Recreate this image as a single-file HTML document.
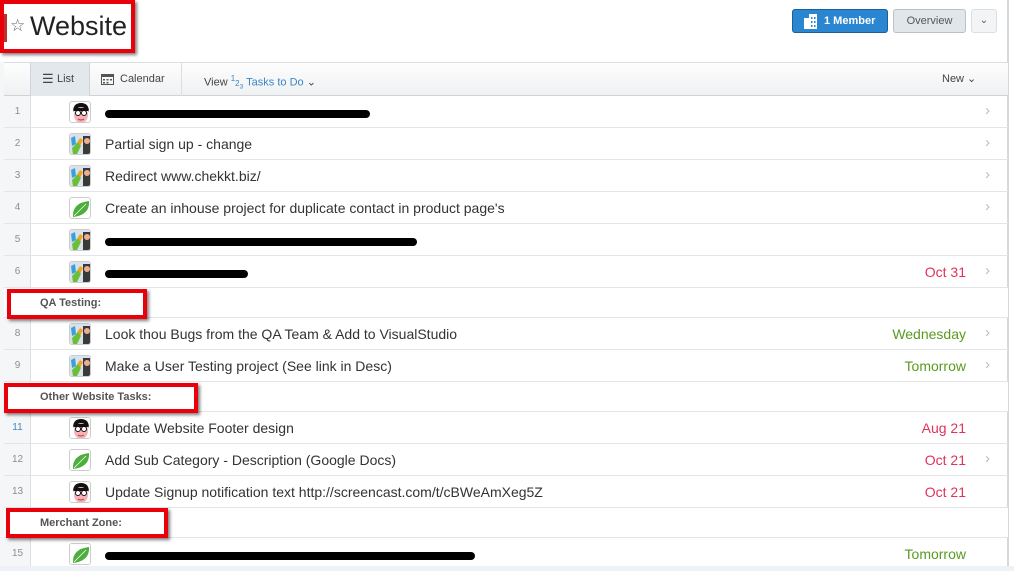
<!DOCTYPE html>
<html><head><meta charset="utf-8"><style>
*{box-sizing:border-box;margin:0;padding:0}
body{width:1014px;height:571px;overflow:hidden;background:#fff;font-family:"Liberation Sans",Arial,sans-serif;position:relative;color:#333}
.gut{position:absolute;left:0;top:62px;width:31px;height:509px;background:#f5f6f7;border-right:1px solid #dde0e3}
.rf{position:absolute;border:4px solid #e8000a;box-shadow:2px 2px 3px rgba(0,0,0,.5)}
.tb{position:absolute;left:4px;top:62px;width:1004px;height:34px;background:linear-gradient(#fdfdfd,#f0f1f2);border-top:1px solid #dcdfe2;border-bottom:1px solid #cfd3d7}
.row{position:absolute;left:4px;width:1004px;height:32px;border-bottom:1px solid #e3e5e8;font-size:14px}
.row .n{position:absolute;left:0;width:27px;text-align:center;top:10px;font-size:10px;color:#8a8f95}
.row .t{position:absolute;left:101px;top:8px;color:#333}
.row .d{position:absolute;right:42px;top:8px}
.row .c{position:absolute;right:18px;top:6px;color:#b8bcc0;font-size:15px}
.av{position:absolute;left:65px;top:5px;width:22px;height:22px;border:1px solid #ccc;border-radius:3px;overflow:hidden;background:#fff}
.bar{position:absolute;left:101px;top:14px;height:8px;background:#000;border-radius:4px}
.sec{position:absolute;left:4px;width:1004px;height:30px;border-bottom:1px solid #e3e5e8;background:#fff}
.sec span{position:absolute;left:36px;top:9px;font-size:11px;color:#555;font-weight:bold}
.red{color:#e0335a}.grn{color:#5a9a1f}
</style></head><body>
<div class="gut"></div>
<div style="position:absolute;left:1007px;top:0;width:2px;height:571px;background:#d6d9dc"></div>
<div class="rf" style="left:0;top:0;width:135px;height:53px"></div>
<div style="position:absolute;left:4px;top:14px;width:3px;height:28px;background:#b33"></div>
<div style="position:absolute;left:10px;top:16px;font-size:17px;color:#666">☆</div>
<div style="position:absolute;left:30px;top:11px;font-size:27px;color:#222">Website</div>
<div style="position:absolute;left:792px;top:9px;width:96px;height:24px;background:#2a86d0;border:1px solid #1a5f9c;border-radius:3px;color:#fff;font-size:11px;font-weight:bold;line-height:22px;padding-left:31px">1 Member
<svg style="position:absolute;left:10px;top:4px" width="16" height="15"><rect x="1" y="4" width="5" height="11" fill="#fff"/><rect x="6" y="0" width="8" height="15" fill="#fff"/><g fill="#2a86d0"><rect x="8" y="3" width="1.5" height="2"/><rect x="11" y="3" width="1.5" height="2"/><rect x="8" y="7" width="1.5" height="2"/><rect x="11" y="7" width="1.5" height="2"/><rect x="8" y="11" width="1.5" height="2"/><rect x="11" y="11" width="1.5" height="2"/></g></svg></div>
<div style="position:absolute;left:893px;top:9px;width:73px;height:24px;background:#e1e6eb;border:1px solid #b9c1c9;border-radius:3px;color:#555;font-size:11px;line-height:22px;text-align:center">Overview</div>
<div style="position:absolute;left:971px;top:9px;width:26px;height:24px;background:#f3f4f5;border:1px solid #dcdfe2;border-radius:3px;color:#555;font-size:10px;line-height:22px;text-align:center">⌄</div>
<div class="tb">
<div style="position:absolute;left:26px;top:0;width:60px;height:33px;background:#e3e8ed;border-left:1px solid #cfd4da;border-right:1px solid #cfd4da;font-size:11px;color:#444;line-height:32px;padding-left:26px">List<span style="position:absolute;left:11px;top:0;font-size:13px">☰</span></div>
<div style="position:absolute;left:86px;top:0;width:92px;height:33px;border-right:1px solid #dcdfe2;font-size:11px;color:#444;line-height:32px;padding-left:30px">Calendar
<svg style="position:absolute;left:11px;top:10px" width="13" height="12"><rect x="0.5" y="1.5" width="12" height="10" fill="none" stroke="#555"/><rect x="0" y="1" width="13" height="3" fill="#555"/><g fill="#555"><rect x="2" y="6" width="2" height="1.5"/><rect x="5.5" y="6" width="2" height="1.5"/><rect x="9" y="6" width="2" height="1.5"/><rect x="2" y="9" width="2" height="1.5"/><rect x="5.5" y="9" width="2" height="1.5"/></g></svg></div>
<div style="position:absolute;left:200px;top:0;font-size:11px;color:#444;line-height:32px">View <sup style="color:#3b87c6;font-size:8px">1</sup><span style="color:#3b87c6;font-size:8px">2<sub>3</sub></span> <span style="color:#3b87c6">Tasks to Do</span> <span style="color:#444">⌄</span></div>
<div style="position:absolute;left:938px;top:0;font-size:11px;color:#444;line-height:32px">New ⌄</div>
</div>
<div style="position:absolute;left:0;top:566px;width:1014px;height:5px;background:#eef2f6"></div>
<svg width="0" height="0" style="position:absolute"><defs>
<symbol id="face" viewBox="0 0 22 22"><rect width="22" height="22" fill="#fff"/><path d="M3 10 Q3 1 11 1 Q19 1 19 10 L17 6 L5 6Z" fill="#111"/><ellipse cx="11" cy="13" rx="7" ry="8" fill="#f3b3b9"/><path d="M4 6 L18 6 L18 9 L4 9Z" fill="#111"/><circle cx="8" cy="11" r="2.5" fill="#fff" stroke="#111"/><circle cx="14" cy="11" r="2.5" fill="#fff" stroke="#111"/><path d="M8 17 Q11 19 14 17" stroke="#c33" fill="none"/></symbol>
<symbol id="logo" viewBox="0 0 22 22"><rect width="22" height="22" fill="#d9e2ea"/><path d="M1 4 L5 2 L6 10 L2 12Z" fill="#3aa0d8"/><path d="M5 12 L10 4 L13 6 L9 14Z" fill="#f4a020"/><path d="M2 14 L8 8 L11 12 L7 20 L3 20Z" fill="#6abf3a"/><rect x="13" y="2" width="9" height="20" fill="#3a3a3a"/><circle cx="17" cy="7" r="3" fill="#e8b090"/></symbol>
<symbol id="leaf" viewBox="0 0 22 22"><rect width="22" height="22" fill="#fff"/><path d="M3 19 Q2 5 19 3 Q20 17 3 19Z" fill="#4caf3c"/><path d="M4 18 L16 6" stroke="#fff" stroke-width="0.8"/></symbol>
</defs></svg>

<div class="row" style="top:96px"><span class="n">1</span><div class="av"><svg width="22" height="22"><use href="#face"/></svg></div><div class="bar" style="width:265px"></div><span class="c">›</span></div>
<div class="row" style="top:128px"><span class="n">2</span><div class="av"><svg width="22" height="22"><use href="#logo"/></svg></div><span class="t">Partial sign up - change</span><span class="c">›</span></div>
<div class="row" style="top:160px"><span class="n">3</span><div class="av"><svg width="22" height="22"><use href="#logo"/></svg></div><span class="t">Redirect www.chekkt.biz/</span><span class="c">›</span></div>
<div class="row" style="top:192px"><span class="n">4</span><div class="av"><svg width="22" height="22"><use href="#leaf"/></svg></div><span class="t">Create an inhouse project for duplicate contact in product page's</span><span class="c">›</span></div>
<div class="row" style="top:224px"><span class="n">5</span><div class="av"><svg width="22" height="22"><use href="#logo"/></svg></div><div class="bar" style="width:312px"></div></div>
<div class="row" style="top:256px"><span class="n">6</span><div class="av"><svg width="22" height="22"><use href="#logo"/></svg></div><div class="bar" style="width:143px"></div><span class="d red">Oct 31</span><span class="c">›</span></div>
<div class="sec" style="top:288px"><span>QA Testing:</span></div>
<div class="row" style="top:318px"><span class="n">8</span><div class="av"><svg width="22" height="22"><use href="#logo"/></svg></div><span class="t">Look thou Bugs from the QA Team &amp; Add to VisualStudio</span><span class="d grn">Wednesday</span><span class="c">›</span></div>
<div class="row" style="top:350px"><span class="n">9</span><div class="av"><svg width="22" height="22"><use href="#logo"/></svg></div><span class="t">Make a User Testing project (See link in Desc)</span><span class="d grn">Tomorrow</span><span class="c">›</span></div>
<div class="sec" style="top:382px"><span>Other Website Tasks:</span></div>
<div class="row" style="top:412px"><span class="n" style="color:#3b87c6">11</span><div class="av"><svg width="22" height="22"><use href="#face"/></svg></div><span class="t">Update Website Footer design</span><span class="d red">Aug 21</span></div>
<div class="row" style="top:444px"><span class="n">12</span><div class="av"><svg width="22" height="22"><use href="#leaf"/></svg></div><span class="t">Add Sub Category - Description (Google Docs)</span><span class="d red">Oct 21</span><span class="c">›</span></div>
<div class="row" style="top:476px"><span class="n">13</span><div class="av"><svg width="22" height="22"><use href="#face"/></svg></div><span class="t">Update Signup notification text http://screencast.com/t/cBWeAmXeg5Z</span><span class="d red">Oct 21</span></div>
<div class="sec" style="top:508px"><span>Merchant Zone:</span></div>
<div class="row" style="top:538px;border-bottom:none"><span class="n">15</span><div class="av"><svg width="22" height="22"><use href="#leaf"/></svg></div><div class="bar" style="width:370px"></div><span class="d grn">Tomorrow</span></div>

<div class="rf" style="left:7px;top:289px;width:140px;height:30px"></div>
<div class="rf" style="left:4px;top:383px;width:194px;height:30px"></div>
<div class="rf" style="left:6px;top:508px;width:162px;height:30px"></div>
</body></html>
